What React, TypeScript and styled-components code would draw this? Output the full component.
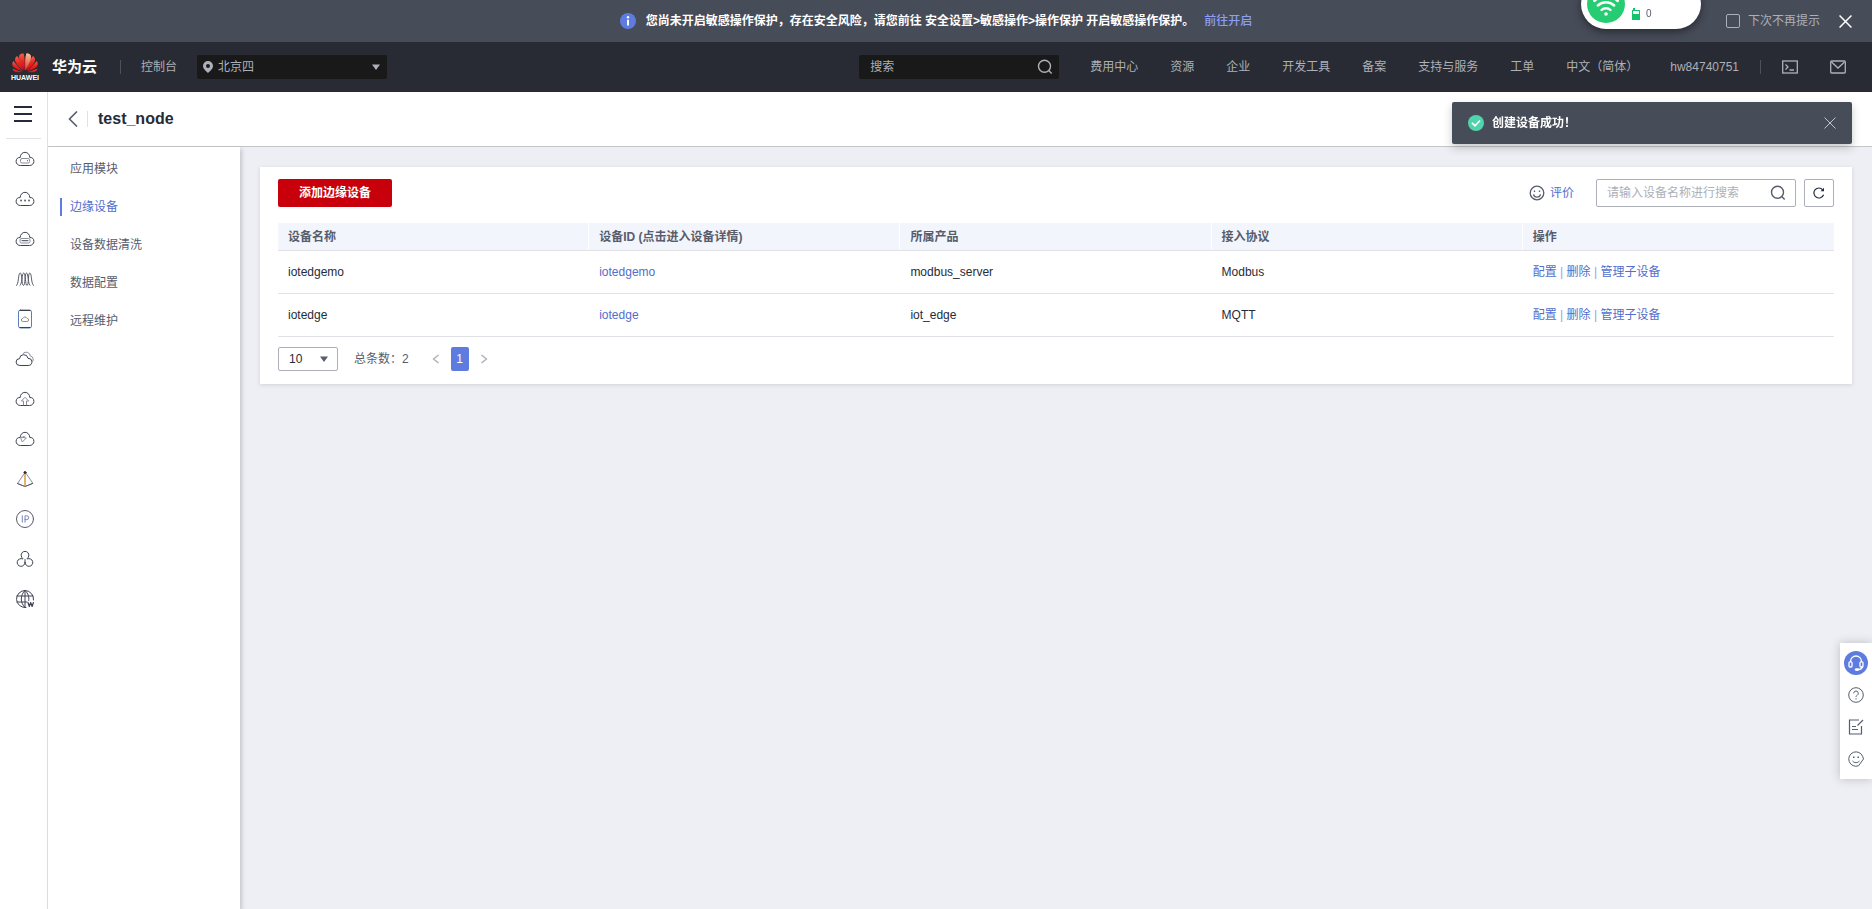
import React, { useState } from 'react';
import styled, { createGlobalStyle } from 'styled-components';

const GlobalStyle = createGlobalStyle`
  *, *::before, *::after { box-sizing: border-box; }
  body {
    margin: 0;
    background: #eeeff5;
    color: #252b3a;
    font-family: 'Liberation Sans', 'Noto Sans CJK SC', sans-serif;
    font-size: 12px;
    line-height: 18px;
  }
  button, input, select { font: inherit; color: inherit; margin: 0; }
  a { color: inherit; text-decoration: none; }
  ul { list-style: none; margin: 0; padding: 0; }
  svg { display: block; flex: none; }
`;

const Page = styled.div`
  display: flex;
  flex-direction: column;
  min-height: 100vh;
`;

const IconButton = styled.button`
  display: flex;
  align-items: center;
  justify-content: center;
  padding: 0;
  border: 0;
  background: none;
  cursor: pointer;
`;

/* ---------- notice strip ---------- */

const Notice = styled.div`
  display: grid;
  grid-template-columns: 1fr auto 1fr;
  align-items: center;
  height: 42px;
  background: #474c59;
  color: #fff;
`;

const NoticeMessage = styled.p`
  grid-column: 2;
  display: flex;
  align-items: center;
  margin: 0;
  font-weight: 700;
  svg { margin-right: 10px; }
`;

const NoticeLink = styled.a`
  margin-left: 10px;
  font-weight: 500;
  color: #8a9ff5;
`;

const NoticeControls = styled.div`
  display: flex;
  align-items: center;
  justify-content: flex-end;
  padding-right: 20px;
  color: #adb0b8;
`;

const DismissLabel = styled.label`
  display: flex;
  align-items: center;
  gap: 8px;
  margin-right: 19px;
`;

const Tick = styled.input`
  appearance: none;
  width: 14px;
  height: 14px;
  border: 1px solid #adb0b8;
  border-radius: 2px;
  &:checked { background: #5e7ce0; }
`;

/* ---------- console header ---------- */

const Header = styled.header`
  display: flex;
  align-items: center;
  height: 50px;
  padding: 0 26px 0 12px;
  background: #282b33;
  color: #adb0b8;
`;

const Brand = styled.a`
  display: flex;
  align-items: center;
  gap: 14px;
`;

const BrandMark = styled.span`
  display: flex;
  flex-direction: column;
  align-items: center;
  gap: 1px;
  width: 26px;
  font-size: 7px;
  line-height: 8px;
  font-weight: 700;
  color: #fff;
`;

const BrandName = styled.span`
  font-size: 15px;
  font-weight: 700;
  color: #fff;
`;

const Divider = styled.span<{ $left: number; $right: number }>`
  width: 1px;
  height: 14px;
  margin: 0 ${p => p.$right}px 0 ${p => p.$left}px;
  background: #4d515c;
`;

const RegionBox = styled.div`
  position: relative;
  display: flex;
  align-items: center;
  width: 190px;
  height: 24px;
  margin-left: 20px;
  border-radius: 2px;
  background: #191919;
`;

const RegionSelect = styled.select`
  appearance: none;
  width: 100%;
  height: 24px;
  padding: 0 24px 0 21px;
  border: 0;
  background: none;
`;

const OverlayIcon = styled.span<{ $side: 'left' | 'right'; $offset: number }>`
  position: absolute;
  ${p => p.$side}: ${p => p.$offset}px;
  pointer-events: none;
`;

const HeaderSearch = styled.div`
  display: flex;
  align-items: center;
  width: 200px;
  height: 24px;
  margin: 0 15px 0 auto;
  padding: 0 6px 0 11px;
  border-radius: 2px;
  background: #191919;
`;

const BareInput = styled.input<{ $hint: string }>`
  flex: 1;
  min-width: 0;
  padding: 0;
  border: 0;
  outline: 0;
  background: none;
  &::placeholder { color: ${p => p.$hint}; opacity: 1; }
`;

const HeaderNav = styled.nav`
  display: flex;
  white-space: nowrap;
  a { padding: 0 16px; }
`;

const HeaderTools = styled.div`
  display: flex;
  gap: 32px;
`;

/* ---------- body ---------- */

const Body = styled.div`
  flex: 1;
  display: flex;
`;

const Rail = styled.nav`
  flex: none;
  width: 48px;
  border-right: 1px solid #dfe1e6;
  background: #fff;
`;

const MenuButton = styled(IconButton)`
  width: 46px;
  height: 46px;
  padding-bottom: 2px;
`;

const RailList = styled.ul`
  margin: 0 6px;
  border-top: 1px solid #dfe1e6;
`;

const RailItem = styled.li`
  height: 40px;
  a {
    display: flex;
    align-items: center;
    justify-content: center;
    height: 40px;
    padding-left: 3px;
  }
`;

const Workspace = styled.div`
  flex: 1;
  min-width: 0;
  display: flex;
  flex-direction: column;
`;

const TitleBar = styled.div`
  display: flex;
  align-items: center;
  height: 55px;
  padding: 0 20px;
  border-bottom: 1px solid #c4c5c9;
  background: #fff;
`;

const TitleRule = styled.span`
  width: 1px;
  height: 16px;
  margin: 0 10px 0 9px;
  background: #dfe1e6;
`;

const Title = styled.h1`
  margin: 0;
  font-size: 16px;
  line-height: 24px;
`;

const Columns = styled.div`
  flex: 1;
  display: flex;
`;

const SideMenu = styled.nav`
  flex: none;
  width: 192px;
  padding-top: 3px;
  background: #fff;
  box-shadow: 2px 2px 4px rgba(40, 43, 51, 0.2);
`;

const SideLink = styled.a<{ $active?: boolean }>`
  display: flex;
  align-items: center;
  height: 38px;
  padding-left: 12px;
  color: ${p => (p.$active ? '#526ecc' : '#575d6c')};
  &::before {
    content: '';
    width: 2px;
    height: 18px;
    margin-right: 8px;
    background: ${p => (p.$active ? '#5e7ce0' : 'transparent')};
  }
`;

const Main = styled.main`
  flex: 1;
  min-width: 0;
  padding: 20px;
`;

const Card = styled.section`
  padding: 12px 18px 13px;
  background: #fff;
  box-shadow: 0 1px 4px rgba(40, 43, 51, 0.14);
`;

const Toolbar = styled.div`
  display: flex;
  align-items: center;
  height: 28px;
  margin-bottom: 16px;
`;

const PrimaryButton = styled.button`
  height: 28px;
  padding: 0 21px;
  border: 0;
  border-radius: 2px;
  background: #c7000b;
  color: #fff;
  font-weight: 700;
  cursor: pointer;
`;

const RateLink = styled.a`
  display: flex;
  align-items: center;
  gap: 5px;
  margin: 0 22px 0 auto;
  color: #526ecc;
`;

const SearchField = styled.div`
  display: flex;
  align-items: center;
  width: 200px;
  height: 28px;
  margin-right: 8px;
  padding: 0 9px 0 10px;
  border: 1px solid #adb0b8;
  border-radius: 2px;
`;

const RefreshButton = styled(IconButton)`
  width: 30px;
  height: 28px;
  border: 1px solid #adb0b8;
  border-radius: 2px;
`;

const DeviceTable = styled.table`
  width: 100%;
  table-layout: fixed;
  border-collapse: separate;
  border-spacing: 0;
  text-align: left;
  th, td {
    padding: 0 10px;
    border-bottom: 1px solid #dfe1e6;
  }
  th {
    height: 28px;
    background: #f2f5fc;
    color: #575d6c;
    font-weight: 700;
  }
  th:not(:last-child) { box-shadow: inset -1px 0 #fff; }
  td { height: 43px; }
`;

const TableLink = styled.a`
  color: #526ecc;
`;

const Actions = styled.span`
  color: #8fa3e8;
`;

const Pager = styled.div`
  display: flex;
  align-items: center;
  height: 24px;
  margin-top: 10px;
  color: #575d6c;
`;

const PageSize = styled.div`
  position: relative;
  display: flex;
  align-items: center;
  margin-right: 16px;
`;

const PageSizeSelect = styled.select`
  appearance: none;
  width: 60px;
  height: 24px;
  padding: 0 10px;
  border: 1px solid #adb0b8;
  border-radius: 2px;
  background: #fff;
  color: #252b3a;
`;

const PageArrow = styled(IconButton)`
  width: 30px;
  height: 24px;
`;

const PageArrows = styled.div`
  display: flex;
  margin-left: 12px;
`;

const PageNumber = styled.button`
  width: 18px;
  height: 24px;
  padding: 0;
  border: 0;
  border-radius: 2px;
  background: #5e7ce0;
  color: #fff;
`;

/* ---------- layers over the page ---------- */

const Toast = styled.div`
  position: fixed;
  top: 102px;
  right: 20px;
  display: flex;
  align-items: center;
  width: 400px;
  height: 42px;
  padding: 0 16px;
  border-radius: 2px;
  background: #474c59;
  color: #fff;
  font-weight: 700;
  box-shadow: 0 4px 8px rgba(40, 43, 51, 0.25);
  svg { margin-right: 8px; }
  button { margin-left: auto; }
  button svg { margin: 0; }
`;

const NetworkPill = styled.div`
  position: fixed;
  top: -21px;
  right: 171px;
  display: flex;
  align-items: center;
  width: 120px;
  height: 50px;
  padding: 0 6px;
  border-radius: 25px;
  background: #fff;
  color: #575d6c;
  font-size: 10px;
  box-shadow: 0 3px 8px rgba(0, 0, 0, 0.45);
`;

const BatteryLevel = styled.span`
  display: flex;
  align-items: center;
  gap: 6px;
  margin: 20px 0 0 7px;
`;

const HelpDock = styled.aside`
  position: fixed;
  right: 0;
  bottom: 130px;
  display: flex;
  flex-direction: column;
  align-items: center;
  width: 32px;
  height: 136px;
  padding-top: 4px;
  background: #fff;
  box-shadow: 0 0 10px rgba(40, 43, 51, 0.25);
`;

const DockButton = styled(IconButton)`
  width: 32px;
  height: 32px;
`;

/* ---------- icons ---------- */

type Drawn = { size?: number; color?: string; children?: React.ReactNode };

const Stroke = ({ size = 20, color = '#3c4252', children }: Drawn) => (
  <svg width={size} height={size} viewBox="0 0 20 20" fill="none" stroke={color} strokeLinecap="round" strokeLinejoin="round" aria-hidden="true">
    {children}
  </svg>
);

const Cloud = ({ children }: { children?: React.ReactNode }) => (
  <Stroke>
    <path d="M5 16.5a4 4 0 0 1 .2-8a4.8 5.2 0 0 1 9.6 0a4 4 0 0 1 .2 8z" />
    {children}
  </Stroke>
);

const Cross = ({ size, color, width = 1 }: { size: number; color: string; width?: number }) => (
  <svg width={size} height={size} viewBox="0 0 12 12" stroke={color} strokeWidth={width} aria-hidden="true">
    <path d="M.5.5l11 11M11.5.5l-11 11" />
  </svg>
);

const Magnifier = ({ color }: { color: string }) => (
  <svg width="16" height="16" viewBox="0 0 16 16" fill="none" stroke={color} strokeWidth="1.4" aria-hidden="true">
    <circle cx="7.5" cy="7.3" r="6" />
    <path d="M11.7 11.5l3 3" />
  </svg>
);

const Caret = ({ color }: { color: string }) => (
  <svg width="8" height="6" viewBox="0 0 8 6" fill={color} aria-hidden="true">
    <path d="M0 .5h8L4 6z" />
  </svg>
);

const Angle = ({ flip }: { flip?: boolean }) => (
  <svg width="8" height="10" viewBox="0 0 8 10" fill="none" stroke="#adb0b8" strokeWidth="1.4" aria-hidden="true">
    <path d={flip ? 'M1.5 1l5 4-5 4' : 'M6.5 1l-5 4 5 4'} />
  </svg>
);

const centrePetal = 'M13.4 17.5C13 11 13.3 4 14.4.6C17 .1 19 1.6 19 4C19 8 16 13 13.4 17.5z';

const Petals = () => (
  <g>
    <path d={centrePetal} />
    <path d="M14.2 17.8C16 12 18.5 6 20.8 3C22.8 4 23.6 6.2 22.6 8.8C21 12.5 17 16 14.2 17.8z" />
    <path d="M15 18.3C18 15.4 21.5 11.7 24.8 8C26.2 10.5 26 13 23.8 14.6C21.5 16.2 18 17.6 15 18.3z" />
    <path d="M15.3 19L25.3 16C24.7 18.4 22.7 19.2 20.6 19.3C18.7 19.4 16.9 19.2 15.3 19z" />
  </g>
);

const FlowerLogo = () => (
  <svg width="26" height="20" viewBox="0 0 26 20" aria-hidden="true">
    <defs>
      <linearGradient id="petal" x1="0" y1="0" x2="0" y2="1">
        <stop offset="0" stopColor="#f2604a" />
        <stop offset="0.5" stopColor="#e8231f" />
        <stop offset="1" stopColor="#c8101c" />
      </linearGradient>
      <linearGradient id="glow" x1="0" y1="0" x2="0" y2="1">
        <stop offset="0" stopColor="#f8c39a" />
        <stop offset="1" stopColor="#e0342c" />
      </linearGradient>
    </defs>
    <g fill="url(#petal)"><Petals /></g>
    <g fill="url(#petal)" transform="matrix(-1 0 0 1 26 0)"><Petals /></g>
    <path fill="url(#glow)" d={centrePetal} />
  </svg>
);

const railIcons: { label: string; icon: React.ReactNode }[] = [
  {
    label: '弹性云服务器',
    icon: <Cloud><rect x="5.5" y="9.5" width="9" height="4.5" rx="1.5" stroke="#8a8e99" /><path d="M12.5 11.7h.1" /></Cloud>,
  },
  {
    label: '更多云服务',
    icon: <Cloud><path d="M6 11.5h.1M10 11.5h.1M14 11.5h.1" strokeWidth="1.8" stroke="#575d6c" /></Cloud>,
  },
  {
    label: '裸金属服务器',
    icon: <Cloud><rect x="5" y="9.5" width="10" height="4.5" rx="1.5" stroke="#8a8e99" /><path d="M7 11.7h6" /></Cloud>,
  },
  {
    label: '弹性伸缩',
    icon: (
      <Stroke color="#575d6c">
        <path d="M1.5 16.5C4 15.5 3 4 5.2 4S6.500 16.500 8.500 16.500S9.500 4 11.500 4S13 16.500 15 16.500" />
        <path d="M5 16.5C7.500 15.500 6.500 4 8.700 4S10 16.500 12 16.500S12.700 4 14.800 4S16 15.500 18.500 16.500" />
      </Stroke>
    ),
  },
  {
    label: '云硬盘',
    icon: (
      <Stroke>
        <rect x="3.5" y="1" width="13" height="18" rx="2" stroke="#5c7fb5" />
        <path d="M5 1.5h10M5 18.5h10" />
        <path d="M7.8 12.5a1.5 1.5 0 0 1 0-3 2.3 2.3 0 0 1 4.3 0 1.5 1.5 0 0 1 .2 3z" stroke="#8a8e99" />
      </Stroke>
    ),
  },
  {
    label: '专属云',
    icon: (
      <Stroke>
        <path d="M4.5 16.5a3.4 3.4 0 0 1 0-6.8a4.3 4.5 0 0 1 8.5-.4a3.6 3.6 0 0 1 .5 7.2z" />
        <path d="M8 4.500a4.200 4.200 0 0 1 7.300 2.500a3.500 3.500 0 0 1 1.200 6.500" stroke="#8a8e99" />
      </Stroke>
    ),
  },
  {
    label: '云备份',
    icon: <Cloud><path d="M8.5 16v-4H6.3L10 8.3l3.7 3.700h-2.200v4" stroke="#8a8e99" /></Cloud>,
  },
  {
    label: '云容器引擎',
    icon: <Cloud><path d="M5.5 8.5l1.8 4.5 3.7-3.7zM8 7.5l2 .5" stroke="#8a8e99" /></Cloud>,
  },
  {
    label: '虚拟私有云',
    icon: (
      <Stroke color="#575d6c">
        <path d="M10 3.5L2.5 14.5 10 17.5l7.500-3z" stroke="#8a8e99" />
        <path d="M2.5 14.5L10 17.5l7.500-3" />
        <path d="M10 3.5v13.5" stroke="#d9923a" strokeWidth="1.4" />
        <circle cx="10" cy="3.5" r="1" fill="#252b3a" stroke="#252b3a" />
      </Stroke>
    ),
  },
  {
    label: '弹性公网IP',
    icon: (
      <Stroke color="#575d6c">
        <circle cx="10" cy="10" r="8.5" />
        <path d="M7.3 6.8v6.4M10 13.2V6.8h1.8a1.9 1.9 0 0 1 0 3.8H10" stroke="#7a86b8" />
      </Stroke>
    ),
  },
  {
    label: '区块链服务',
    icon: (
      <Stroke>
        <path d="M7.800 9.500a3.900 3.900 0 1 1 4.400 0" />
        <path d="M10 13.500a3.900 3.900 0 1 1-2.500-3.700M10 13.500a3.900 3.900 0 1 0 2.500-3.700M10 10.500v3" />
      </Stroke>
    ),
  },
  {
    label: '域名服务',
    icon: (
      <Stroke>
        <path d="M18.500 11A8.500 8.500 0 1 0 11 18.500M10 1.500v17M2 7h16M2 13h10M10 1.500c-5 4.500-5 12.500 0 17M10 1.500c3.300 3 4.300 6.500 3.700 10" />
        <path d="M13 13.5l1.300 4 1.400-4 1.400 4 1.300-4" strokeWidth="1.2" />
      </Stroke>
    ),
  },
];

const headerLinks = ['费用中心', '资源', '企业', '开发工具', '备案', '支持与服务', '工单', '中文（简体）', 'hw84740751'];
const sideLinks = ['应用模块', '边缘设备', '设备数据清洗', '数据配置', '远程维护'];
const columns = ['设备名称', '设备ID (点击进入设备详情)', '所属产品', '接入协议', '操作'];
const devices = [
  { name: 'iotedgemo', product: 'modbus_server', protocol: 'Modbus' },
  { name: 'iotedge', product: 'iot_edge', protocol: 'MQTT' },
];

export default function App() {
  const [muted, setMuted] = useState(false);

  return (
    <Page>
      <GlobalStyle />
      <Notice>
        <NoticeMessage>
          <svg width="16" height="16" viewBox="0 0 16 16" aria-hidden="true">
            <circle cx="8" cy="8" r="8" fill="#5e7ce0" />
            <circle cx="8" cy="4.2" r="1.2" fill="#fff" />
            <path d="M8 6.8v5.7" stroke="#fff" strokeWidth="2" />
          </svg>
          您尚未开启敏感操作保护，存在安全风险，请您前往 安全设置&gt;敏感操作&gt;操作保护 开启敏感操作保护。
          <NoticeLink href="#protection">前往开启</NoticeLink>
        </NoticeMessage>
        <NoticeControls>
          <DismissLabel>
            <Tick type="checkbox" checked={muted} onChange={e => setMuted(e.target.checked)} />
            下次不再提示
          </DismissLabel>
          <IconButton aria-label="关闭提示"><Cross size={13} color="#fff" width={1.4} /></IconButton>
        </NoticeControls>
      </Notice>

      <Header>
        <Brand href="#home">
          <BrandMark><FlowerLogo />HUAWEI</BrandMark>
          <BrandName>华为云</BrandName>
        </Brand>
        <Divider $left={23} $right={20} />
        <a href="#console">控制台</a>
        <RegionBox>
          <OverlayIcon $side="left" $offset={6}>
            <svg width="10" height="12" viewBox="0 0 10 12" aria-hidden="true">
              <path fill="#adb0b8" fillRule="evenodd" d="M5 0a5 5 0 0 1 5 5c0 2.8-3 5-5 7-2-2-5-4.200-5-7a5 5 0 0 1 5-5zm0 3a2 2 0 1 0 0 4 2 2 0 0 0 0-4z" />
            </svg>
          </OverlayIcon>
          <RegionSelect aria-label="区域"><option>北京四</option></RegionSelect>
          <OverlayIcon $side="right" $offset={7}><Caret color="#adb0b8" /></OverlayIcon>
        </RegionBox>
        <HeaderSearch>
          <BareInput $hint="#adb0b8" placeholder="搜索" aria-label="搜索" />
          <IconButton aria-label="搜索"><Magnifier color="#adb0b8" /></IconButton>
        </HeaderSearch>
        <HeaderNav>
          {headerLinks.map(text => <a key={text} href="#nav">{text}</a>)}
        </HeaderNav>
        <Divider $left={5} $right={21} />
        <HeaderTools>
          <IconButton aria-label="命令行">
            <svg width="16" height="14" viewBox="0 0 16 14" fill="none" stroke="#adb0b8" strokeWidth="1.3">
              <rect x=".7" y="1" width="14.6" height="12" />
              <path d="M3.5 4.5L6 7 3.500 9.500M7.500 10h4.500" />
            </svg>
          </IconButton>
          <IconButton aria-label="消息">
            <svg width="16" height="14" viewBox="0 0 16 14" fill="none" stroke="#adb0b8" strokeWidth="1.3">
              <rect x=".7" y="1" width="14.6" height="12" rx="1" />
              <path d="M1.5 2L8 8l6.500-6" />
            </svg>
          </IconButton>
        </HeaderTools>
      </Header>

      <Body>
        <Rail aria-label="服务列表">
          <MenuButton aria-label="展开菜单">
            <svg width="18" height="16" viewBox="0 0 18 16" fill="#252b3a" aria-hidden="true">
              <path d="M0 0h18v2H0zM0 7h18v2H0zM0 14h18v2H0z" />
            </svg>
          </MenuButton>
          <RailList>
            {railIcons.map(item => (
              <RailItem key={item.label}><a href="#service" aria-label={item.label}>{item.icon}</a></RailItem>
            ))}
          </RailList>
        </Rail>

        <Workspace>
          <TitleBar>
            <IconButton aria-label="返回">
              <svg width="10" height="16" viewBox="0 0 10 16" fill="none" stroke="#575d6c" strokeWidth="1.6">
                <path d="M9 .5L1.500 8 9 15.500" />
              </svg>
            </IconButton>
            <TitleRule />
            <Title>test_node</Title>
          </TitleBar>
          <Columns>
            <SideMenu aria-label="节点菜单">
              {sideLinks.map((text, i) => <SideLink key={text} href="#section" $active={i === 1}>{text}</SideLink>)}
            </SideMenu>
            <Main>
              <Card>
                <Toolbar>
                  <PrimaryButton>添加边缘设备</PrimaryButton>
                  <RateLink href="#rate">
                    <svg width="16" height="16" viewBox="0 0 16 16" fill="none" stroke="#575d6c" strokeWidth="1.3" aria-hidden="true">
                      <circle cx="8" cy="8" r="6.8" />
                      <path d="M4.5 9.3a3.600 3.600 0 0 0 7 0" />
                      <path d="M5.5 5.5v1.500M10.500 5.500v1.500" />
                    </svg>
                    评价
                  </RateLink>
                  <SearchField>
                    <BareInput $hint="#adb0b8" placeholder="请输入设备名称进行搜索" aria-label="设备名称" />
                    <IconButton aria-label="搜索设备"><Magnifier color="#575d6c" /></IconButton>
                  </SearchField>
                  <RefreshButton aria-label="刷新">
                    <svg width="12" height="12" viewBox="0 0 12 12" fill="none" stroke="#252b3a" strokeWidth="1.2" aria-hidden="true">
                      <path d="M10.6 7.8A5 5 0 1 1 9.800 2.800" />
                      <path d="M11 .8v3.400H7.600z" fill="#252b3a" stroke="none" />
                    </svg>
                  </RefreshButton>
                </Toolbar>
                <DeviceTable>
                  <thead>
                    <tr>{columns.map(text => <th key={text} scope="col">{text}</th>)}</tr>
                  </thead>
                  <tbody>
                    {devices.map(device => (
                      <tr key={device.name}>
                        <td>{device.name}</td>
                        <td><TableLink href="#device">{device.name}</TableLink></td>
                        <td>{device.product}</td>
                        <td>{device.protocol}</td>
                        <td>
                          <Actions>
                            <TableLink href="#config">配置</TableLink> | <TableLink href="#delete">删除</TableLink> | <TableLink href="#children">管理子设备</TableLink>
                          </Actions>
                        </td>
                      </tr>
                    ))}
                  </tbody>
                </DeviceTable>
                <Pager>
                  <PageSize>
                    <PageSizeSelect aria-label="每页条数" defaultValue="10">
                      <option>10</option>
                      <option>20</option>
                    </PageSizeSelect>
                    <OverlayIcon $side="right" $offset={10}><Caret color="#575d6c" /></OverlayIcon>
                  </PageSize>
                  <span>总条数：2</span>
                  <PageArrows>
                    <PageArrow aria-label="上一页"><Angle /></PageArrow>
                    <PageNumber aria-current="page">1</PageNumber>
                    <PageArrow aria-label="下一页"><Angle flip /></PageArrow>
                  </PageArrows>
                </Pager>
              </Card>
            </Main>
          </Columns>
        </Workspace>
      </Body>

      <NetworkPill>
        <svg width="38" height="38" viewBox="0 0 38 38" fill="none" stroke="#fff" strokeWidth="2.4" strokeLinecap="round" aria-hidden="true">
          <circle cx="19" cy="19" r="19" fill="#26cc71" stroke="none" />
          <path d="M14.5 25a6.500 6.500 0 0 1 9 0M10.800 20.500a12 12 0 0 1 16.400 0M7.200 16a17.500 17.500 0 0 1 23.600 0" />
          <circle cx="19" cy="29" r="1.8" fill="#fff" stroke="none" />
        </svg>
        <BatteryLevel>
          <svg width="8" height="12" viewBox="0 0 8 12" fill="#14c46a" aria-hidden="true">
            <path fillRule="evenodd" d="M1 0h2v2h5v10H0V2h1zM1 3v3h6V3z" />
          </svg>
          0
        </BatteryLevel>
      </NetworkPill>

      <Toast role="status">
        <svg width="16" height="16" viewBox="0 0 16 16" aria-hidden="true">
          <circle cx="8" cy="8" r="8" fill="#50d4ab" />
          <path d="M4 7.8l3 3 5-5.300" fill="none" stroke="#fff" strokeWidth="1.8" />
        </svg>
        创建设备成功！
        <IconButton aria-label="关闭"><Cross size={12} color="#c3c5cb" /></IconButton>
      </Toast>

      <HelpDock>
        <DockButton aria-label="在线客服">
          <svg width="24" height="24" viewBox="0 0 24 24" fill="none" stroke="#fff" strokeWidth="1.3">
            <circle cx="12" cy="12" r="12" fill="#5e7ce0" stroke="none" />
            <path d="M6.500 11V10.500a5.500 5.500 0 0 1 11 0V11M18.500 15.500c-.5 2-2 3-4 3" />
            <rect x="5" y="10.8" width="3" height="5.2" rx="1" />
            <rect x="16" y="10.8" width="3" height="5.2" rx="1" />
            <ellipse cx="13" cy="18.6" rx="1.8" ry=".8" fill="#fff" />
          </svg>
        </DockButton>
        <DockButton aria-label="帮助">
          <svg width="16" height="16" viewBox="0 0 16 16" fill="none" stroke="#575d6c">
            <circle cx="8" cy="8" r="7.3" />
            <path d="M5.700 6.300a2.300 2.300 0 1 1 3.500 2C8.300 8.900 8 9.200 8 10M8 11.300v1.200" />
          </svg>
        </DockButton>
        <DockButton aria-label="建议">
          <svg width="16" height="16" viewBox="0 0 16 16" fill="none" stroke="#575d6c" strokeWidth="1.2">
            <path d="M11 1H1.500v14h12V7M4 7.500h4M4 10.500h6M15 1L9.500 6.500" />
          </svg>
        </DockButton>
        <DockButton aria-label="满意度">
          <svg width="16" height="16" viewBox="0 0 16 16" fill="none" stroke="#575d6c">
            <path d="M14.700 5.500A7.200 7.200 0 1 0 10.500 14.800M4.500 10c1.800 2.200 5 2.200 7 0M14.700 5.500l.8 2.500-5 6.800" />
            <path d="M5 6.200h1.500M9.500 6.200H11" strokeWidth="1.5" />
          </svg>
        </DockButton>
      </HelpDock>
    </Page>
  );
}
